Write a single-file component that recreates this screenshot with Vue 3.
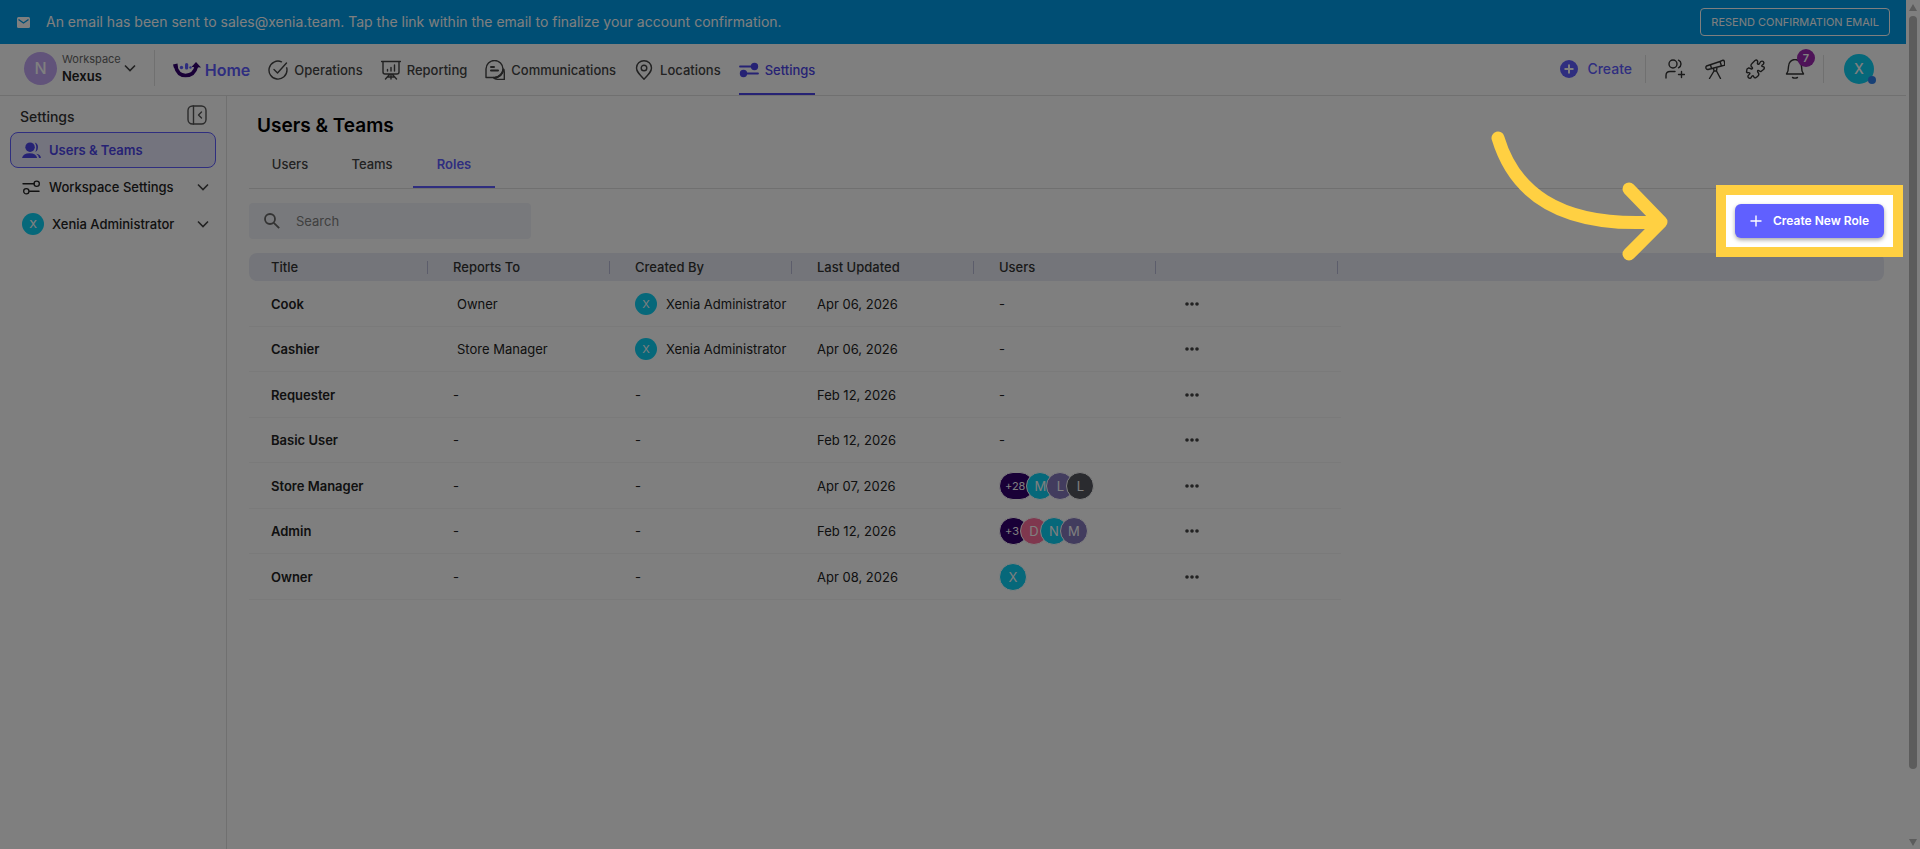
<template>
    <div class="screen">
        <div class="app">
            <div class="banner">
                <svg class="mail-icon" viewBox="0 0 13 11">
                    <rect width="13" height="11" rx="1.5" fill="#fff" />
                    <path d="M1.5 2.5 6.5 6l5-3.5" fill="none" stroke="#009ce8" stroke-width="1.4" />
                </svg>
                <span class="banner-text">An email has been sent to sales@xenia.team. Tap the link within the email to finalize your account confirmation.</span>
                <button class="resend">RESEND CONFIRMATION EMAIL</button>
            </div>

            <header class="topbar">
                <button class="workspace">
                    <span class="workspace-avatar">N</span>
                    <span class="workspace-names">
                        <span class="workspace-label">Workspace</span>
                        <span class="workspace-name">Nexus</span>
                    </span>
                    <svg class="chevron" viewBox="0 0 12 8"><path d="m1 1.500 5 5 5-5" /></svg>
                </button>
                <nav class="nav">
                    <a href="#" class="home">
                        <svg class="logo" viewBox="0 0 28 18">
                            <path d="M2.500 5C4 11.500 7.500 14.500 12.500 14.500S22 11.500 23.500 5" fill="none" stroke="#32006e" stroke-width="3.600" />
                            <path d="M0 3.500 4.500 2.500 5 7H1z" fill="#32006e" />
                            <path d="M18.500 6 23 1l5 5.500z" fill="#32006e" />
                            <circle cx="8.500" cy="6.500" r="1.700" fill="#5f5cff" />
                            <rect x="12" y="2" width="3.200" height="6.500" rx="1.600" fill="#5f5cff" />
                            <circle cx="17.500" cy="6.500" r="1.200" fill="#5f5cff" />
                        </svg>
                        Home
                    </a>
                    <a href="#" class="nav-item">
                        <svg class="icon nav-icon" viewBox="0 0 20 20">
                            <path d="M13.500 1.800A9 9 0 1 0 19 10c0-.8-.1-1.500-.3-2.200" />
                            <path d="m6 9.500 3.500 3.500L18.500 3" />
                        </svg>
                        Operations
                    </a>
                    <a href="#" class="nav-item">
                        <svg class="icon nav-icon" viewBox="0 0 20 20">
                            <path d="M.5 1.500h19M2 1.500v10.500q0 2 2 2h12q2 0 2-2V1.500M10 14v5M8.500 14.500l-4 4.500M11.500 14.500l4 4.500M6.500 17h7" />
                            <path d="M6.500 11V9.500M10 11V7.500M13.500 11V5" />
                        </svg>
                        Reporting
                    </a>
                    <a href="#" class="nav-item">
                        <svg class="icon nav-icon" viewBox="0 0 20 20">
                            <path d="M1 17.500V9a8.500 8.500 0 1 1 8.500 8.500z" />
                            <path d="M6 7h3M6 10.500h7" stroke-width="2" />
                            <path d="M18.500 9.500q1 1.500.8 4V19.500l-7-.2q-2.500-.2-3.800-1.800" />
                            <path d="M18.500 9.500q-1.500 7-9 8.500" stroke-width="2" />
                        </svg>
                        Communications
                    </a>
                    <a href="#" class="nav-item">
                        <svg class="icon nav-icon" viewBox="0 0 20 20">
                            <path d="M10 19.200C5 14 2.500 11.500 2.500 8a7.500 7.300 0 0 1 15 0c0 3.500-2.500 6-7.500 11.200z" />
                            <circle cx="10" cy="8" r="2.800" />
                        </svg>
                        Locations
                    </a>
                    <a href="#" class="nav-item current">
                        <svg class="icon nav-icon" viewBox="0 0 20 20">
                            <path d="M1 6.500h13M6 13.500h13" stroke-width="1.800" />
                            <circle cx="15.500" cy="6.500" r="3" fill="currentColor" />
                            <circle cx="4.500" cy="13.500" r="3" fill="currentColor" />
                        </svg>
                        Settings
                    </a>
                </nav>
                <div class="actions">
                    <button class="create">
                        <svg class="create-icon" viewBox="0 0 18 18">
                            <circle cx="9" cy="9" r="9" fill="#5f5cff" />
                            <path d="M9 4.500v9M4.500 9h9" stroke="#fff" stroke-width="2" />
                        </svg>
                        Create
                    </button>
                    <div class="tools">
                        <button class="tool" aria-label="Invite user">
                            <svg class="icon nav-icon" viewBox="0 0 20 20">
                                <circle cx="8" cy="5" r="4" />
                                <path d="M13.500 1.200q2.500 1.300 2.500 3.800t-2.500 3.800M1 19v-2.500Q1 12.500 5 12.500h5M16.500 12.500v6M13.500 15.500h6" />
                            </svg>
                        </button>
                        <button class="tool" aria-label="Explore">
                            <svg class="icon nav-icon" viewBox="0 0 20 20">
                                <path d="M1.500 7 15 2.500l1.500 4.500L3 10.500q-1.500.2-2-1.200-.4-1.500.5-2.300zM15 2.500l3-1.300q1 0 1.300 1l.5 3q0 1-.8 1.200l-2.500.6M5.500 6l1 3.500M8.500 9.500l.5 2.500h2.500l.5-3.500M9 12l-4.500 7.500M11.500 12l4 7.500" />
                            </svg>
                        </button>
                        <button class="tool" aria-label="Integrations">
                            <svg class="icon nav-icon" viewBox="0 0 20 20">
                                <path d="M7 4.500 10 1.500q1.500-1 2.500.5c.8 1.800-.8 2 .2 3s1.700-.5 2.300-1.500c.8-1.700 3.300-2 3.800 0 .5 2.300-2.300 2.300-2 3.500.3 1 1.700.2 2.300 1.200q.6 1-.6 2.300l-2.500 2c-1.200.6-1.800-1.600-3-1s.5 2.500.8 3.500q.2 1.500-1.300 2.500l-2 1.300c-2 .7-1.500-2.500-3-2s-1 2.500-2.500 2.500-2.500-1.500-1.800-2.800c.7-1.200 2.300-1.500 1.500-2.500S2.500 14.500 1.500 13t.5-3l1.500-1c1.500-.5 2 1.500 3.500.8s-.7-1.800-1-3q-.2-1.300 1-2.300z" />
                            </svg>
                        </button>
                        <button class="tool" aria-label="Notifications">
                            <svg class="icon nav-icon" viewBox="0 0 20 20">
                                <path d="M1.500 15q2-2.500 2-7.500a6.500 7 0 0 1 13 0q0 5 2 7.500zM7.500 18.500q2.500 1.200 5 0" />
                            </svg>
                            <span class="badge">7</span>
                        </button>
                    </div>
                    <button class="profile" aria-label="Profile">X<span class="status"></span></button>
                </div>
            </header>

            <div class="body">
                <aside class="sidebar">
                    <div class="sidebar-head">
                        <span>Settings</span>
                        <button class="collapse" aria-label="Collapse menu">
                            <svg class="icon nav-icon" viewBox="0 0 20 20">
                                <rect x="1" y="1" width="18" height="18" rx="4.500" />
                                <path d="M6.500 1v18M14.500 7l-3 3 3 3" />
                            </svg>
                        </button>
                    </div>
                    <a href="#" class="side-item active">
                        <svg class="side-icon" viewBox="0 0 20 18">
                            <circle cx="8.500" cy="5.500" r="5" fill="currentColor" />
                            <path d="M0 17q1-5 8-5t8 5zM13.500.5q4.500 1.500 3 7.500-.8 2-2.500 2.500 2.500-5-.5-10zM15 12.500q4.500.5 5 4.500h-2q-.5-3-3-4.500z" fill="currentColor" />
                        </svg>
                        Users &amp; Teams
                    </a>
                    <a href="#" class="side-item">
                        <svg class="icon side-icon" viewBox="0 0 20 18">
                            <path d="M1 5h12M8 13h10" />
                            <circle cx="15.500" cy="5" r="2.800" />
                            <circle cx="4.500" cy="13" r="2.800" />
                        </svg>
                        Workspace Settings
                        <svg class="chevron" viewBox="0 0 12 8"><path d="m1 1.500 5 5 5-5" /></svg>
                    </a>
                    <a href="#" class="side-item">
                        <span class="avatar">X</span>
                        Xenia Administrator
                        <svg class="chevron" viewBox="0 0 12 8"><path d="m1 1.500 5 5 5-5" /></svg>
                    </a>
                </aside>

                <main class="main">
                    <h1>Users &amp; Teams</h1>
                    <div class="tabs">
                        <button
                            v-for="tab in tabs"
                            :key="tab"
                            class="tab"
                            :class="{ 'selected': tab === activeTab }"
                            @click="activeTab = tab"
                        >{{ tab }}</button>
                    </div>

                    <div class="toolbar">
                        <label class="search">
                            <svg class="search-icon" viewBox="0 0 16 16">
                                <circle cx="6" cy="6" r="5" />
                                <path d="m9.800 9.800 5.400 5.400" />
                            </svg>
                            <input v-model="query" type="text" placeholder="Search" aria-label="Search">
                        </label>
                        <div class="new-role">
                            <button class="new-role-button">
                                <svg viewBox="0 0 12 12"><path d="M6 .5v11M.5 6h11" /></svg>
                                Create New Role
                            </button>
                            <div class="spotlight"></div>
                            <svg class="arrow" viewBox="0 0 178 130">
                                <path d="M7 7C22 57 63 97 165 91M138 58l32 33-32 32" />
                            </svg>
                        </div>
                    </div>

                    <table class="roles">
                        <thead>
                            <tr>
                                <th v-for="(column, i) in columns" :key="i"><span>{{ column }}</span></th>
                                <th class="rest"></th>
                            </tr>
                        </thead>
                        <tbody>
                            <tr v-for="role in filteredRoles" :key="role.title">
                                <td class="title">{{ role.title }}</td>
                                <td><span v-if="role.reportsTo" class="reports">{{ role.reportsTo }}</span><template v-else>-</template></td>
                                <td>
                                    <div v-if="role.createdBy" class="person">
                                        <span class="avatar">X</span>{{ role.createdBy }}
                                    </div>
                                    <template v-else>-</template>
                                </td>
                                <td>{{ role.updated }}</td>
                                <td>
                                    <div v-if="role.users.length" class="stack">
                                        <span
                                            v-for="(user, i) in role.users"
                                            :key="i"
                                            class="member"
                                            :class="user.tone"
                                        >{{ user.text }}</span>
                                    </div>
                                    <template v-else>-</template>
                                </td>
                                <td>
                                    <button class="more" aria-label="More actions">
                                        <svg viewBox="0 0 14 4">
                                            <circle cx="2" cy="2" r="1.800" />
                                            <circle cx="7" cy="2" r="1.800" />
                                            <circle cx="12" cy="2" r="1.800" />
                                        </svg>
                                    </button>
                                </td>
                                <td class="rest"></td>
                            </tr>
                        </tbody>
                    </table>
                </main>
            </div>
        </div>

        <div class="scrollbar">
            <svg viewBox="0 0 8 7"><path d="M4 0 8 7H0z" /></svg>
            <div class="track"><div class="thumb"></div></div>
            <svg viewBox="0 0 8 7"><path d="M0 0h8L4 7z" /></svg>
        </div>
    </div>
</template>

<script setup>
    import { ref, computed } from 'vue';

    const tabs = ['Users', 'Teams', 'Roles'];
    const activeTab = ref('Roles');
    const query = ref('');

    const columns = ['Title', 'Reports To', 'Created By', 'Last Updated', 'Users', ''];

    const roles = [
        { title: 'Cook', reportsTo: 'Owner', createdBy: 'Xenia Administrator', updated: 'Apr 06, 2026', users: [] },
        { title: 'Cashier', reportsTo: 'Store Manager', createdBy: 'Xenia Administrator', updated: 'Apr 06, 2026', users: [] },
        { title: 'Requester', updated: 'Feb 12, 2026', users: [] },
        { title: 'Basic User', updated: 'Feb 12, 2026', users: [] },
        {
            title: 'Store Manager',
            updated: 'Apr 07, 2026',
            users: [
                { text: '+28', tone: 'count' },
                { text: 'M', tone: 'cyan' },
                { text: 'L', tone: 'violet' },
                { text: 'L', tone: 'slate' }
            ]
        },
        {
            title: 'Admin',
            updated: 'Feb 12, 2026',
            users: [
                { text: '+3', tone: 'count' },
                { text: 'D', tone: 'pink' },
                { text: 'N', tone: 'cyan' },
                { text: 'M', tone: 'violet' }
            ]
        },
        { title: 'Owner', updated: 'Apr 08, 2026', users: [{ text: 'X', tone: 'cyan' }] }
    ];

    const filteredRoles = computed(() => {
        const text = query.value.trim().toLowerCase();
        return roles.filter(role => role.title.toLowerCase().includes(text));
    });
</script>

<style>
    body {
        margin: 0;
        background: #808080;
    }
</style>

<style scoped>
    .screen {
        display: flex;
        height: 100vh;
        overflow: hidden;
        background: #fff;
        color: #333;
        font-family: Inter, "Liberation Sans", sans-serif;
        font-size: 13px;
        line-height: 18px;
    }

    .screen * {
        box-sizing: border-box;
    }

    button {
        padding: 0;
        border: none;
        background: none;
        color: inherit;
        font: inherit;
        cursor: pointer;
    }

    a {
        color: inherit;
        text-decoration: none;
    }

    svg {
        display: block;
        flex: none;
    }

    .app {
        flex: 1;
        min-width: 0;
        display: flex;
        flex-direction: column;
    }

    .icon {
        fill: none;
        stroke: currentColor;
        stroke-width: 1.4;
        stroke-linecap: round;
        stroke-linejoin: round;
    }

    .nav-icon {
        width: 20px;
        height: 20px;
    }

    .chevron {
        width: 12px;
        height: 8px;
        fill: none;
        stroke: #444;
        stroke-width: 1.6;
    }

    .banner {
        display: flex;
        align-items: center;
        height: 44px;
        padding: 0 16px;
        background: #009ce8;
        color: #fff;
    }

    .mail-icon {
        width: 13px;
        height: 11px;
        margin: 0 16px 0 1px;
    }

    .banner-text {
        font-size: 14px;
    }

    .resend {
        height: 28px;
        margin-left: auto;
        padding: 0 10px;
        border: 1px solid #fff;
        border-radius: 4px;
        font-size: 11px;
    }

    .topbar {
        display: flex;
        height: 52px;
        padding: 0 32px 0 24px;
        border-bottom: 1px solid #e0e0e0;
    }

    .workspace {
        display: flex;
        align-items: center;
        height: 36px;
        margin: 6px 0;
        padding-right: 18px;
        border-right: 1px solid #e0e0e0;
        text-align: left;
    }

    .workspace-avatar {
        width: 33px;
        height: 33px;
        margin-right: 5px;
        border-radius: 50%;
        background: #c2a6f4;
        color: #fff;
        font-size: 16px;
        font-weight: 500;
        line-height: 33px;
        text-align: center;
    }

    .workspace-names {
        display: flex;
        flex-direction: column;
        margin-right: 3px;
    }

    .workspace-label {
        color: #666;
        font-size: 11px;
        line-height: 16px;
    }

    .workspace-name {
        color: #222;
        font-weight: 600;
    }

    .nav {
        display: flex;
        gap: 18px;
        padding-left: 18px;
        font-weight: 500;
    }

    .home,
    .nav-item {
        display: flex;
        align-items: center;
        gap: 6px;
        padding-top: 2px;
        border-bottom: 2px solid transparent;
        color: #444;
    }

    .home {
        gap: 4px;
        color: #5f5cff;
        font-size: 16px;
        font-weight: 600;
    }

    .logo {
        width: 28px;
        height: 18px;
    }

    .nav-item.current {
        border-color: #4c44e8;
        color: #4c44e8;
    }

    .actions {
        display: flex;
        align-items: center;
        margin-left: auto;
        padding-bottom: 2px;
    }

    .create {
        display: flex;
        align-items: center;
        gap: 9px;
        color: #5f5cff;
        font-size: 14px;
        font-weight: 500;
    }

    .create-icon {
        width: 18px;
        height: 18px;
    }

    .tools {
        display: flex;
        align-items: center;
        gap: 20px;
        height: 28px;
        margin: 0 20px 0 13px;
        padding: 0 18px 0 19px;
        border: solid #e0e0e0;
        border-width: 0 1px;
    }

    .tool {
        position: relative;
    }

    .badge {
        position: absolute;
        top: -10px;
        left: 12px;
        width: 18px;
        height: 18px;
        border-radius: 50%;
        background: #9c27b0;
        color: #fff;
        font-size: 11px;
        font-weight: 600;
        text-align: center;
    }

    .profile {
        position: relative;
        width: 30px;
        height: 30px;
        border-radius: 50%;
        background: #0cd0f4;
        color: #fff;
        font-size: 14px;
        font-weight: 500;
    }

    .status {
        position: absolute;
        right: -2px;
        bottom: 0;
        width: 8px;
        height: 8px;
        border-radius: 50%;
        background: #2f80ed;
    }

    .body {
        flex: 1;
        display: flex;
    }

    .sidebar {
        flex: none;
        width: 227px;
        padding: 8px 10px;
        border-right: 1px solid #e0e0e0;
    }

    .sidebar-head {
        display: flex;
        justify-content: space-between;
        align-items: flex-start;
        height: 28px;
        padding: 1px 9px 0 10px;
        font-size: 14px;
        font-weight: 500;
        line-height: 24px;
    }

    .collapse {
        color: #555;
    }

    .side-item {
        display: flex;
        align-items: center;
        gap: 8px;
        height: 36px;
        margin-bottom: 1px;
        padding: 0 6px 0 11px;
        border: 1px solid transparent;
        border-radius: 8px;
        color: #222;
        font-weight: 500;
    }

    .side-item.active {
        border-color: #5f5cff;
        background: #e9e8fc;
        color: #4c44e8;
        font-weight: 600;
    }

    .side-item .chevron {
        margin-left: auto;
    }

    .side-icon {
        width: 19px;
        height: 17px;
    }

    .avatar {
        width: 22px;
        height: 22px;
        border-radius: 50%;
        background: #0cd0f4;
        color: #fff;
        font-size: 11px;
        line-height: 22px;
        text-align: center;
    }

    .main {
        flex: 1;
        min-width: 0;
        padding: 16px 22px;
    }

    h1 {
        margin: 0;
        padding-left: 8px;
        color: #000;
        font-size: 19px;
        font-weight: 600;
        line-height: 28px;
    }

    .tabs {
        display: flex;
        border-bottom: 1px solid #e0e0e0;
    }

    .tab {
        width: 82px;
        height: 48px;
        padding-top: 2px;
        border-bottom: 2px solid transparent;
        color: #444;
        font-weight: 500;
    }

    .tab.selected {
        border-color: #5f5cff;
        color: #5f5cff;
        font-weight: 600;
    }

    .toolbar {
        display: flex;
        align-items: center;
        justify-content: space-between;
        margin: 14px 0;
    }

    .search {
        display: flex;
        align-items: center;
        gap: 16px;
        width: 282px;
        height: 36px;
        padding: 0 15px;
        border-radius: 4px;
        background: #f1f3f8;
    }

    .search-icon {
        width: 16px;
        height: 16px;
        fill: none;
        stroke: #666;
        stroke-width: 1.8;
    }

    .search input {
        flex: 1;
        min-width: 0;
        padding: 0;
        border: none;
        outline: none;
        background: none;
        color: #333;
        font: inherit;
    }

    .search input::placeholder {
        color: #808080;
        opacity: 1;
    }

    .new-role {
        position: relative;
    }

    .new-role-button {
        display: flex;
        align-items: center;
        gap: 11px;
        height: 34px;
        padding: 0 15px;
        border-radius: 6px;
        background: #6060ff;
        box-shadow: 0 2px 4px rgba(0, 0, 0, 0.35);
        color: #fff;
        font-size: 12px;
        font-weight: 600;
        white-space: nowrap;
    }

    .new-role-button svg {
        width: 12px;
        height: 12px;
        stroke: #fff;
        stroke-width: 1.4;
    }

    /* dims the whole page except for the framed button */
    .spotlight {
        position: absolute;
        inset: -19px;
        z-index: 10;
        border: 10px solid #ffd042;
        box-shadow: 0 0 0 9999px rgba(0, 0, 0, 0.5);
        pointer-events: none;
    }

    .arrow {
        position: absolute;
        top: -73px;
        right: calc(100% + 66px);
        z-index: 11;
        width: 178px;
        height: 130px;
        fill: none;
        stroke: #ffd042;
        stroke-width: 13;
        stroke-linecap: round;
        stroke-linejoin: round;
        pointer-events: none;
    }

    .roles {
        width: 100%;
        table-layout: fixed;
        border-spacing: 0;
    }

    th {
        width: 182px;
        height: 28px;
        padding: 0 0 0 22px;
        background: #e9ebf4;
        font-weight: 500;
        text-align: left;
    }

    th span {
        display: block;
        height: 13px;
        margin-right: 3px;
        border-right: 1px solid #b8bad6;
        line-height: 13px;
    }

    th:first-child {
        border-radius: 8px 0 0 8px;
    }

    th.rest {
        width: auto;
        border-radius: 0 8px 8px 0;
    }

    td {
        height: 46px;
        padding: 0 0 0 22px;
        border-bottom: 1px solid #f4f4f4;
        color: #222;
        white-space: nowrap;
    }

    tr:nth-child(even) td {
        height: 45px;
    }

    td.rest {
        border: none;
    }

    .title {
        font-weight: 600;
    }

    .reports {
        padding-left: 4px;
    }

    .person {
        display: flex;
        align-items: center;
        gap: 9px;
    }

    .stack {
        display: flex;
    }

    .member {
        min-width: 28px;
        height: 28px;
        margin-right: -8px;
        border: 1px solid #fff;
        border-radius: 14px;
        color: #fff;
        font-size: 13px;
        line-height: 26px;
        text-align: center;
    }

    .count {
        padding: 0 8px 0 5px;
        background: #32006e;
        font-size: 11px;
    }

    .cyan {
        background: #0cd0f4;
    }

    .violet {
        background: #8478bc;
    }

    .pink {
        background: #ff6f9c;
    }

    .slate {
        background: #54565f;
    }

    .more {
        display: block;
        padding: 6px 4px;
    }

    .more svg {
        width: 14px;
        height: 4px;
        fill: #444;
    }

    .scrollbar {
        display: flex;
        flex-direction: column;
        align-items: center;
        gap: 5px;
        width: 14px;
        padding: 4px 0 3px;
    }

    .scrollbar svg {
        width: 8px;
        height: 7px;
        fill: #b8b8b8;
    }

    .track {
        flex: 1;
    }

    .thumb {
        width: 8px;
        height: 92%;
        border-radius: 4px;
        background: #b8b8b8;
    }
</style>
